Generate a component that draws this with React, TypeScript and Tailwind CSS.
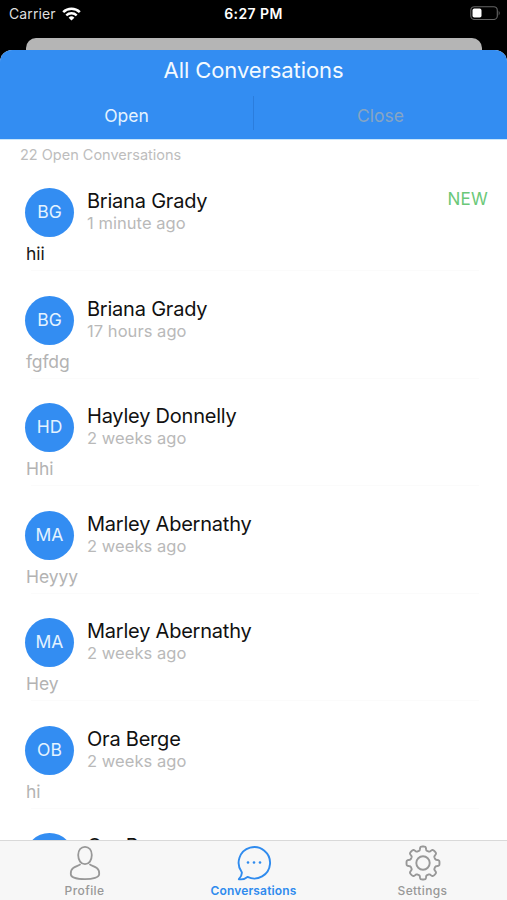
import type { ReactNode } from "react";

type Conversation = {
  initials: string;
  name: string;
  time: string;
  message: string;
  isNew?: boolean;
};

const conversations: Conversation[] = [
  { initials: "BG", name: "Briana Grady", time: "1 minute ago", message: "hii", isNew: true },
  { initials: "BG", name: "Briana Grady", time: "17 hours ago", message: "fgfdg" },
  { initials: "HD", name: "Hayley Donnelly", time: "2 weeks ago", message: "Hhi" },
  { initials: "MA", name: "Marley Abernathy", time: "2 weeks ago", message: "Heyyy" },
  { initials: "MA", name: "Marley Abernathy", time: "2 weeks ago", message: "Hey" },
  { initials: "OB", name: "Ora Berge", time: "2 weeks ago", message: "hi" },
  { initials: "OB", name: "Ora Berge", time: "2 weeks ago", message: "hi" },
];

// Eight rounded teeth around a 36x36 box
function gearPath() {
  const points: string[] = [];
  for (let i = 0; i < 240; i++) {
    const angle = (i / 240) * Math.PI * 2;
    const wave = Math.tanh(2.6 * (Math.cos(8 * angle) + 0.1));
    const radius = 14.6 + 1.9 * wave;
    points.push(
      `${(18 + radius * Math.sin(angle)).toFixed(2)} ${(18 - radius * Math.cos(angle)).toFixed(2)}`,
    );
  }
  return `M${points.join("L")}Z`;
}

function StatusBar() {
  return (
    <div className="flex h-[38px] shrink-0 items-start justify-between text-white">
      <div className="flex w-[160px] items-center pl-[9px] pt-[5px]">
        <span className="text-[14px] leading-[18px] tracking-[0.1px] text-[#dedede]">Carrier</span>
        <svg className="ml-[6px] h-[14px] w-[19px]" viewBox="0 0 19 14" fill="none">
          <path d="M1.2 5.1a12 12 0 0 1 16.6 0" stroke="#fff" strokeWidth="2.6" />
          <path d="M4.3 8.4a7.4 7.4 0 0 1 10.4 0" stroke="#fff" strokeWidth="2.3" />
          <path d="M9.5 13.6 6.6 10.7a4.1 4.1 0 0 1 5.8 0Z" fill="#fff" />
        </svg>
      </div>
      <span className="pt-[5px] text-[14px] font-semibold leading-[18px] tracking-[0.4px]">6:27 PM</span>
      <div className="flex w-[160px] justify-end pr-[6px] pt-[6px]">
        <svg className="h-[14px] w-[31px]" viewBox="0 0 31 14">
          <rect x="0.8" y="0.7" width="26.5" height="12.8" rx="3.6" fill="none" stroke="#656565" strokeWidth="1.1" />
          <rect x="2.5" y="2.6" width="9" height="9" rx="1.8" fill="#fff" />
          <path d="M28.7 4.8q2 2.3 0 4.6Z" fill="#656565" />
        </svg>
      </div>
    </div>
  );
}

function SheetHeader() {
  return (
    <header className="h-[90px] shrink-0 border-b border-[#c9e6fb] bg-[#338df2] text-[#f3faff]">
      <h1 className="pt-[6px] text-center text-[22px] leading-[28px] tracking-[-0.08px]">All Conversations</h1>
      <div className="mt-[12px] flex h-[34px] items-center text-[17.5px] leading-[22px]">
        <span className="flex-1 pt-[6px] text-center text-[#e4f3ff]">Open</span>
        <div className="h-[34px] w-px bg-[#2b7ddd]" />
        <span className="flex-1 pt-[6px] text-center text-[#86a5c4]">Close</span>
      </div>
    </header>
  );
}

function ConversationRow({ initials, name, time, message, isNew }: Conversation) {
  return (
    <li className="h-[107.5px] shrink-0 pl-[25px] pr-[19px]">
      <div className="flex">
        <div className="flex size-[49px] items-center justify-center rounded-full bg-[#338df2] text-[17.5px] text-[#e4f3ff]">
          {initials}
        </div>
        <div className="ml-[13px] flex-1">
          <p className="text-[20px] leading-[26px] tracking-[-0.22px] text-[#111111]">{name}</p>
          <p className="-mt-px text-[16.5px] leading-[20px] tracking-[0.05px] text-[#b9b9b9]">{time}</p>
        </div>
        {isNew && <span className="text-[17px] leading-[23px] tracking-[0.2px] text-[#6bc878]">NEW</span>}
      </div>
      <p className={`ml-px mt-[6px] text-[17.5px] leading-[22px] tracking-[-0.1px] ${isNew ? "text-[#171717]" : "text-[#b3b3b3]"}`}>
        {message}
      </p>
      <div className="ml-[6px] mr-[9px] mt-[5px] h-px bg-[#fbfbfb]" />
    </li>
  );
}

function TabItem({ label, active, children }: { label: string; active?: boolean; children: ReactNode }) {
  return (
    <div className={`flex flex-1 flex-col items-center pt-[4px] ${active ? "text-[#2f8bee]" : "text-[#989898]"}`}>
      <svg className="size-[36px]" viewBox="0 0 36 36" fill="none" stroke="currentColor" strokeLinecap="round" strokeLinejoin="round">
        {children}
      </svg>
      <span className={`mt-[3px] text-[12px] leading-[14px] ${active ? "font-semibold tracking-[0.15px]" : "font-medium tracking-[0.4px]"}`}>
        {label}
      </span>
    </div>
  );
}

function TabBar() {
  return (
    <nav className="flex h-[60px] shrink-0 border-t border-[#d9d9d9] bg-[#f7f7f7]">
      <TabItem label="Profile">
        <path
          d="M18 1.8c-4 0-6.8 3.2-6.8 8.2 0 5.4 2.8 9.2 6.8 9.2s6.8-3.8 6.8-9.2c0-5-2.8-8.2-6.8-8.2Z"
          strokeWidth="1.8"
        />
        <path
          d="M13 19.6c-1.8 1.2-4.7 2-6.8 3.4-2.1 1.5-2.5 3.5-2.4 6 0 3.4 6.4 5.2 14.2 5.2s14.2-1.8 14.2-5.2c.1-2.5-.3-4.5-2.4-6-2.1-1.4-5-2.2-6.8-3.4"
          strokeWidth="1.8"
        />
      </TabItem>
      <TabItem label="Conversations" active>
        <path
          d="M5.8 27.2A15.7 15.7 0 1 1 11.5 31.9C9 33.9 5.2 34.7 2.8 34.2c1.7-1.8 3.3-4.3 3-7Z"
          strokeWidth="1.9"
        />
        <g fill="currentColor" stroke="none">
          <circle cx="12" cy="17.5" r="1.3" />
          <circle cx="18" cy="17.5" r="1.3" />
          <circle cx="24" cy="17.5" r="1.3" />
        </g>
      </TabItem>
      <TabItem label="Settings">
        <path d={gearPath()} strokeWidth="1.9" />
        <circle cx="18" cy="18" r="6.7" strokeWidth="1.9" />
      </TabItem>
    </nav>
  );
}

export default function App() {
  return (
    <div className="flex h-[900px] w-[507px] flex-col overflow-hidden bg-black font-['Inter',sans-serif]">
      <StatusBar />
      <div className="ml-[26px] mr-[25px] h-[12px] shrink-0 rounded-t-[10px] bg-[#b5b5b5]" />
      <main className="flex min-h-0 flex-1 flex-col overflow-hidden rounded-t-[12px] bg-white">
        <SheetHeader />
        <p className="pl-[20px] pt-[6px] text-[14.5px] leading-[18px] text-[#bdbdbd]">22 Open Conversations</p>
        <ul className="mt-6 flex min-h-0 flex-1 flex-col overflow-hidden">
          {conversations.map((conversation, index) => (
            <ConversationRow key={index} {...conversation} />
          ))}
        </ul>
      </main>
      <TabBar />
    </div>
  );
}
